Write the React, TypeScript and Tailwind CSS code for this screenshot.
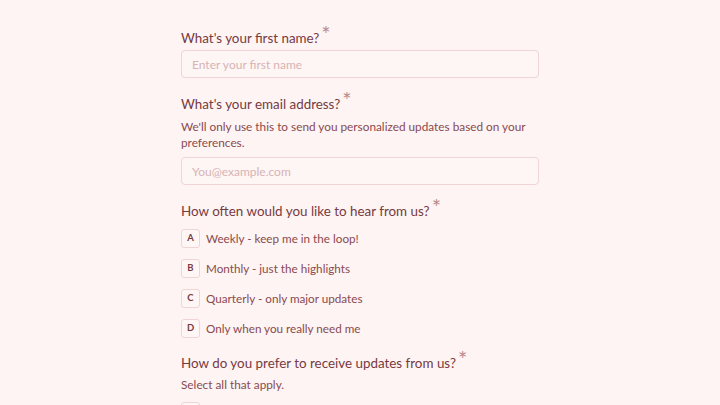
import React from "react";

const options = [
  { key: "A", label: "Weekly - keep me in the loop!" },
  { key: "B", label: "Monthly - just the highlights" },
  { key: "C", label: "Quarterly - only major updates" },
  { key: "D", label: "Only when you really need me" },
];

function Heading({ children }: { children: React.ReactNode }) {
  return (
    <h2 className="text-[13.4px] leading-[20px] text-[#773a3f] flex items-start">
      <span>{children}</span>
      <span className="text-[#bb8a8d] text-[22px] leading-[16px] ml-[2px] -mt-[2px]">*</span>
    </h2>
  );
}

export default function App() {
  return (
    <div
      className="w-[720px] h-[405px] overflow-hidden bg-[#fdf4f3]"
      style={{ fontFamily: "Lato, 'Noto Sans', sans-serif" }}
    >
      <div className="w-[358px] mx-auto pt-[28px]">
        <Heading>What's your first name?</Heading>
        <input
          className="mt-[2px] w-full h-[28px] rounded-[4px] border border-[#f0d5d5] bg-[#fdf6f5] px-[10px] text-[12px] text-[#7a3b40] placeholder:text-[#d8b3b4] outline-none"
          placeholder="Enter your first name"
        />

        <div className="mt-[16px]">
          <Heading>What's your email address?</Heading>
        </div>
        <p className="mt-[5px] text-[11.8px] leading-[16px] text-[#8a4a4f]">
          We'll only use this to send you personalized updates based on your preferences.
        </p>
        <input
          className="mt-[6px] w-full h-[28px] rounded-[4px] border border-[#f0d5d5] bg-[#fdf6f5] px-[10px] text-[12px] text-[#7a3b40] placeholder:text-[#d8b3b4] outline-none"
          placeholder="You@example.com"
        />

        <div className="mt-[16px]">
          <Heading>How often would you like to hear from us?</Heading>
        </div>
        <div className="mt-[8px] flex flex-col gap-[11px]">
          {options.map((o) => (
            <div key={o.key} className="flex items-center gap-[6px] h-[19px]">
              <span className="w-[19px] h-[19px] flex items-center justify-center rounded-[3px] border border-[#f0d5d5] bg-[#fdf6f5] text-[9.5px] font-bold text-[#7a3b40]">
                {o.key}
              </span>
              <span className="text-[11.7px] text-[#8a4a4f]">{o.label}</span>
            </div>
          ))}
        </div>

        <div className="mt-[15px]">
          <Heading>How do you prefer to receive updates from us?</Heading>
        </div>
        <p className="mt-[4px] text-[11.8px] leading-[16px] text-[#8a4a4f]">Select all that apply.</p>
        <div className="mt-[9px] w-[19px] h-[19px] rounded-[3px] border border-[#f0d5d5] bg-[#fdf6f5]" />
      </div>
    </div>
  );
}
